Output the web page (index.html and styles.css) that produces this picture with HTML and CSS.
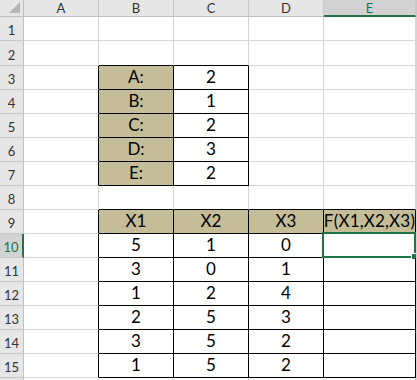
FILE: index.html
```html
<!DOCTYPE html>
<html>
<head>
  <title>Sheet1</title>
  <link rel="stylesheet" href="styles.css">
</head>
<body>
  <div class="sheet">
    <!-- column headers -->
    <div class="corner">
      <svg width="23" height="16" viewBox="0 0 23 16"><polygon points="20,2 20,13 9,13" fill="#b4b4b4"/></svg>
    </div>
    <div class="colhead">A</div>
    <div class="colhead">B</div>
    <div class="colhead">C</div>
    <div class="colhead">D</div>
    <div class="colhead active">E</div>
    <div class="colhead"></div>

    <!-- row 1 -->
    <div class="rowhead">1</div>
    <div class="cell"></div><div class="cell"></div><div class="cell"></div><div class="cell"></div><div class="cell"></div><div class="cell"></div>

    <!-- row 2 -->
    <div class="rowhead">2</div>
    <div class="cell"></div><div class="cell bb"></div><div class="cell bb"></div><div class="cell"></div><div class="cell"></div><div class="cell"></div>

    <!-- rows 3-7: parameters -->
    <div class="rowhead">3</div>
    <div class="cell rb"></div><div class="cell box tan">A:</div><div class="cell box">2</div><div class="cell"></div><div class="cell"></div><div class="cell"></div>

    <div class="rowhead">4</div>
    <div class="cell rb"></div><div class="cell box tan">B:</div><div class="cell box">1</div><div class="cell"></div><div class="cell"></div><div class="cell"></div>

    <div class="rowhead">5</div>
    <div class="cell rb"></div><div class="cell box tan">C:</div><div class="cell box">2</div><div class="cell"></div><div class="cell"></div><div class="cell"></div>

    <div class="rowhead">6</div>
    <div class="cell rb"></div><div class="cell box tan">D:</div><div class="cell box">3</div><div class="cell"></div><div class="cell"></div><div class="cell"></div>

    <div class="rowhead">7</div>
    <div class="cell rb"></div><div class="cell box tan">E:</div><div class="cell box">2</div><div class="cell"></div><div class="cell"></div><div class="cell"></div>

    <!-- row 8 -->
    <div class="rowhead">8</div>
    <div class="cell"></div><div class="cell bb"></div><div class="cell bb"></div><div class="cell bb"></div><div class="cell bb"></div><div class="cell"></div>

    <!-- rows 9-15: table -->
    <div class="rowhead">9</div>
    <div class="cell rb"></div><div class="cell box tan">X1</div><div class="cell box tan">X2</div><div class="cell box tan">X3</div><div class="cell box tan wide">F(X1,X2,X3)</div><div class="cell"></div>

    <div class="rowhead active">10</div>
    <div class="cell rb"></div><div class="cell box">5</div><div class="cell box">1</div><div class="cell box">0</div>
    <div class="cell box selected"><span class="sel"><span class="handle"></span></span></div><div class="cell"></div>

    <div class="rowhead">11</div>
    <div class="cell rb"></div><div class="cell box">3</div><div class="cell box">0</div><div class="cell box">1</div><div class="cell box"></div><div class="cell"></div>

    <div class="rowhead">12</div>
    <div class="cell rb"></div><div class="cell box">1</div><div class="cell box">2</div><div class="cell box">4</div><div class="cell box"></div><div class="cell"></div>

    <div class="rowhead">13</div>
    <div class="cell rb"></div><div class="cell box">2</div><div class="cell box">5</div><div class="cell box">3</div><div class="cell box"></div><div class="cell"></div>

    <div class="rowhead">14</div>
    <div class="cell rb"></div><div class="cell box">3</div><div class="cell box">5</div><div class="cell box">2</div><div class="cell box"></div><div class="cell"></div>

    <div class="rowhead">15</div>
    <div class="cell rb"></div><div class="cell box">1</div><div class="cell box">5</div><div class="cell box">2</div><div class="cell box"></div><div class="cell"></div>

    <!-- row 16, cut off by the window -->
    <div class="rowhead"></div>
    <div class="cell"></div><div class="cell"></div><div class="cell"></div><div class="cell"></div><div class="cell"></div><div class="cell"></div>
  </div>
</body>
</html>
```

FILE: styles.css
```css
html, body {
  margin: 0;
  padding: 0;
  background: #fff;
  overflow: hidden;
}

.sheet {
  display: grid;
  grid-template-columns: 24px 75px 75px 75px 75px 92px 1px;
  grid-template-rows: 17px 24px 25px repeat(13, 24px) 2px;
  font-family: Lato, "Liberation Sans", sans-serif;
}

.sheet > div {
  box-sizing: border-box;
  position: relative;
}

.corner {
  background: #e6e6e6;
  border-right: 1px solid #bfbfbf;
  border-bottom: 1px solid #bfbfbf;
}

.corner svg {
  display: block;
}

.colhead {
  background: #e6e6e6;
  border-right: 1px solid #c8c8c8;
  border-bottom: 1px solid #bfbfbf;
  color: #333;
  font-size: 13px;
  line-height: 16px;
  text-align: center;
}

.colhead.active {
  background: #d2d2d2;
  color: #217346;
  border-bottom: 2px solid #217346;
}

.rowhead {
  background: #e6e6e6;
  border-right: 1px solid #bfbfbf;
  border-bottom: 1px solid #c8c8c8;
  color: #333;
  font-size: 13px;
  display: flex;
  align-items: flex-end;
  justify-content: center;
  padding-bottom: 2px;
  overflow: hidden;
}

.rowhead.active {
  background: #d2d2d2;
  color: #217346;
  border-right: 2px solid #217346;
}

.cell {
  border-right: 1px solid #d4d4d4;
  border-bottom: 1px solid #d4d4d4;
  font-size: 17px;
  color: #000;
  display: flex;
  align-items: flex-end;
  justify-content: center;
  padding-bottom: 2px;
  white-space: nowrap;
}

.cell.rb {
  border-right-color: #000;
}

.cell.bb {
  border-bottom-color: #000;
}

.cell.box {
  border-right-color: #000;
  border-bottom-color: #000;
}

.cell.tan {
  background: #c4bd97;
}

.cell.wide {
  letter-spacing: 0.2px;
}

.sel {
  position: absolute;
  left: -2px;
  top: -2px;
  right: -1px;
  bottom: -1px;
  border: 2px solid #217346;
}

.handle {
  position: absolute;
  right: -4px;
  bottom: -4px;
  width: 5px;
  height: 5px;
  background: #217346;
  border: 1px solid #fff;
}
```
